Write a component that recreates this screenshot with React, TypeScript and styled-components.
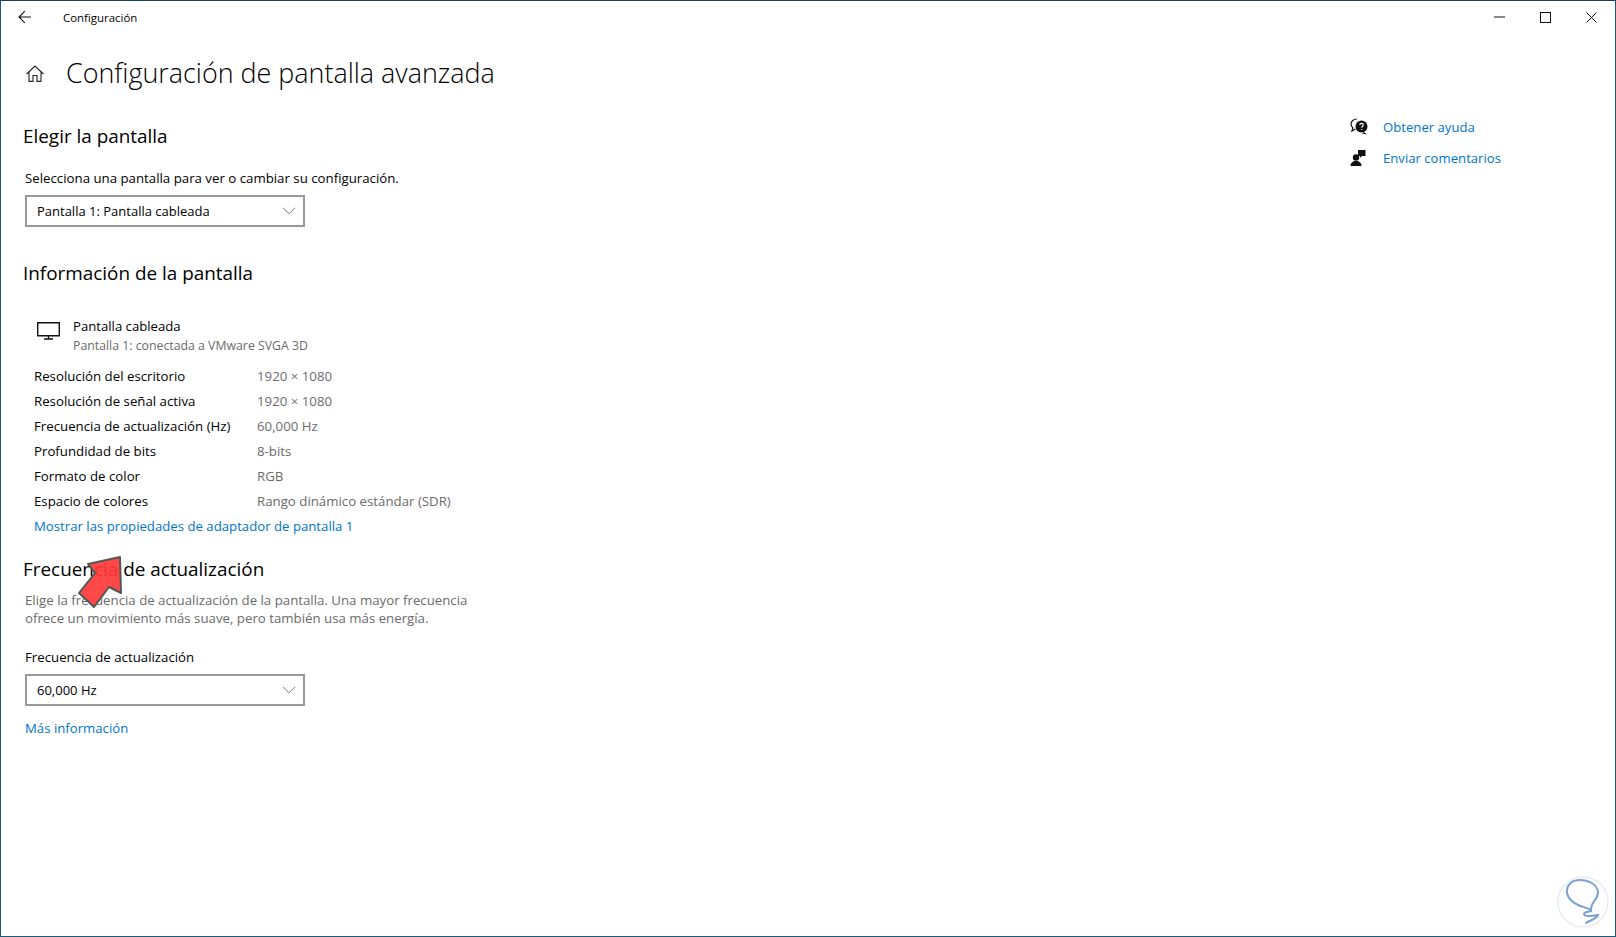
import React from "react";
import styled, { createGlobalStyle } from "styled-components";

const Global = createGlobalStyle`
  html, body { margin: 0; padding: 0; background: #fff; }
  body { font-family: "Open Sans", "Noto Sans", "Liberation Sans", sans-serif; color: #000; }
`;

const Win = styled.div`
  position: relative;
  box-sizing: border-box;
  width: 1616px;
  height: 937px;
  border: 1px solid #1b5a7a;
  border-top-color: #1a3f58;
  background: #fff;
  overflow: hidden;
`;
const TitleBar = styled.header`
  display: flex;
  align-items: center;
  height: 32px;
  padding-right: 1px;
`;
const BackBtn = styled.div`
  width: 48px;
  padding-left: 17px;
  box-sizing: border-box;
  display: flex;
  align-items: center;
`;
const TitleText = styled.span`
  margin-left: 14px;
  font-size: 11.45px;
  flex: 1;
`;
const WinBtn = styled.div`
  width: 46px;
  height: 32px;
  display: flex;
  align-items: center;
  justify-content: center;
`;
const Layout = styled.div`
  display: flex;
  justify-content: space-between;
`;
const Main = styled.main`
  width: 600px;
  padding-left: 23px;
`;
const PageHead = styled.div`
  display: flex;
  align-items: center;
  margin-top: 20px;
  height: 40px;
`;
const HomeIcon = styled.div`
  width: 20px;
  margin-left: 2px;
  display: flex;
`;
const PageTitle = styled.h1`
  margin: 0 0 0 20px;
  font-size: 26.9px;
  font-weight: 300;
  line-height: 40px;
`;
const Section = styled.h2<{ $top: number }>`
  margin: ${(p) => p.$top}px 0 0 -1px;
  font-size: 18.9px;
  font-weight: 400;
  line-height: 28px;
`;
const Text = styled.p<{ $top: number }>`
  margin: ${(p) => p.$top}px 0 0 1px;
  font-size: 13.25px;
  line-height: 18px;
`;
const Muted = styled(Text)`
  color: #6b6b6b;
`;
const Select = styled.div<{ $top: number }>`
  margin: ${(p) => p.$top}px 0 0 1px;
  box-sizing: border-box;
  width: 280px;
  height: 32px;
  border: 2px solid #999;
  display: flex;
  align-items: center;
  justify-content: space-between;
  padding: 0 7px 0 10px;
  font-size: 13px;
`;
const Device = styled.div`
  display: flex;
  margin: 29px 0 0 13px;
  height: 40px;
`;
const DeviceIcon = styled.div`
  width: 23px;
  margin-right: 13px;
  padding-top: 6px;
`;
const DeviceName = styled.div`
  font-size: 13.15px;
  line-height: 20px;
`;
const DeviceSub = styled.div`
  font-size: 12.3px;
  line-height: 19px;
  color: #6b6b6b;
`;
const Rows = styled.div`
  margin: 8px 0 0 10px;
`;
const Row = styled.div`
  display: grid;
  grid-template-columns: 223px 1fr;
  height: 25px;
  line-height: 25px;
  font-size: 13.25px;
`;
const Value = styled.span`
  color: #6b6b6b;
`;
const Link = styled.a<{ $left?: number; $top?: number }>`
  display: block;
  color: #0074cc;
  font-size: 13.2px;
  line-height: 25px;
  margin: ${(p) => p.$top ?? 0}px 0 0 ${(p) => p.$left ?? 0}px;
`;
const Aside = styled.aside`
  width: 265px;
  padding-top: 78px;
`;
const HelpRow = styled.div`
  display: flex;
  align-items: center;
  height: 31px;
`;
const HelpIcon = styled.div`
  width: 33px;
  box-sizing: border-box;
  display: flex;
`;
const HelpLink = styled.a`
  color: #0074cc;
  font-size: 13.15px;
`;
const ArrowMark = styled.svg`
  position: absolute;
  left: 69px;
  top: 547px;
  pointer-events: none;
`;
const Badge = styled.svg`
  position: absolute;
  left: 1553px;
  top: 871px;
`;

export default function App() {
  const rows = [
    ["Resolución del escritorio", "1920 × 1080"],
    ["Resolución de señal activa", "1920 × 1080"],
    ["Frecuencia de actualización (Hz)", "60,000 Hz"],
    ["Profundidad de bits", "8-bits"],
    ["Formato de color", "RGB"],
    ["Espacio de colores", "Rango dinámico estándar (SDR)"],
  ];
  const chev = (
    <svg width="14" height="8" viewBox="0 0 14 8" fill="none" stroke="#777" strokeWidth="1">
      <path d="M1 .8 7 6.8 13 .8" />
    </svg>
  );
  return (
    <Win>
      <Global />
      <TitleBar>
        <BackBtn>
          <svg width="14" height="14" viewBox="0 0 14 14" fill="none" stroke="#111" strokeWidth="1.1">
            <path d="M13 7H1.2M6.8 1.2 1 7l5.8 5.8" />
          </svg>
        </BackBtn>
        <TitleText>Configuración</TitleText>
        <WinBtn>
          <svg width="11" height="2" viewBox="0 0 11 2"><path d="M0 1h11" stroke="#111" /></svg>
        </WinBtn>
        <WinBtn>
          <svg width="11" height="11" viewBox="0 0 11 11" fill="none"><rect x=".5" y=".5" width="10" height="10" stroke="#111" /></svg>
        </WinBtn>
        <WinBtn>
          <svg width="11" height="11" viewBox="0 0 11 11" fill="none"><path d="M.5.5l10 10M10.500.5l-10 10" stroke="#111" /></svg>
        </WinBtn>
      </TitleBar>
      <Layout>
        <Main>
          <PageHead>
            <HomeIcon>
              <svg width="18" height="17" viewBox="0 0 18 17" fill="none" stroke="#222" strokeWidth="1.1">
                <path d="M.6 9 9 1l8.400 8M3 7v9.400h4V10.500h4v5.900h4V7" />
              </svg>
            </HomeIcon>
            <PageTitle>Configuración de pantalla avanzada</PageTitle>
          </PageHead>
          <Section $top={29}>Elegir la pantalla</Section>
          <Text $top={19}>Selecciona una pantalla para ver o cambiar su configuración.</Text>
          <Select $top={8}>Pantalla 1: Pantalla cableada{chev}</Select>
          <Section $top={32}>Información de la pantalla</Section>
          <Device>
            <DeviceIcon>
              <svg width="23" height="18" viewBox="0 0 23 18" fill="none" stroke="#111" strokeWidth="1.4">
                <path d="M.7.7h21.600v13H.7zM11.500 13.700v3.200M7 17h9" />
              </svg>
            </DeviceIcon>
            <div>
              <DeviceName>Pantalla cableada</DeviceName>
              <DeviceSub>Pantalla 1: conectada a VMware SVGA 3D</DeviceSub>
            </div>
          </Device>
          <Rows>
            {rows.map(([k, v]) => (
              <Row key={k}>
                <span>{k}</span>
                <Value>{v}</Value>
              </Row>
            ))}
            <Link>Mostrar las propiedades de adaptador de pantalla 1</Link>
          </Rows>
          <Section $top={16}>Frecuencia de actualización</Section>
          <Muted $top={8}>
            Elige la frecuencia de actualización de la pantalla. Una mayor frecuencia
            <br />
            ofrece un movimiento más suave, pero también usa más energía.
          </Muted>
          <Text $top={21}>Frecuencia de actualización</Text>
          <Select $top={8}>60,000 Hz{chev}</Select>
          <Link $left={1} $top={10}>Más información</Link>
        </Main>
        <Aside>
          <HelpRow>
            <HelpIcon>
              <svg width="18" height="17" viewBox="0 0 18 17">
                <path d="M7 1C3.400 1 1 3.200 1 6c0 1.500.7 2.800 1.800 3.700L2 13l3.400-2" fill="none" stroke="#111" strokeWidth="1.2" />
                <circle cx="11.500" cy="8.500" r="6" fill="#111" />
                <path d="M14 14l3 2.500-5-1z" fill="#111" />
                <path d="M9.800 7c0-2.200 3.500-2.200 3.500 0 0 1.300-1.700 1.300-1.700 2.700M11.600 11v1" stroke="#fff" strokeWidth="1.1" fill="none" />
              </svg>
            </HelpIcon>
            <HelpLink>Obtener ayuda</HelpLink>
          </HelpRow>
          <HelpRow>
            <HelpIcon>
              <svg width="16" height="16" viewBox="0 0 16 16" fill="#111">
                <circle cx="6" cy="7.500" r="3.200" />
                <path d="M.5 16c0-3.500 2.400-5 5.500-5s5.500 1.500 5.500 5z" />
                <path d="M8 0h7.500v6H12L10 7.700V6H8z" />
              </svg>
            </HelpIcon>
            <HelpLink>Enviar comentarios</HelpLink>
          </HelpRow>
        </Aside>
      </Layout>
      <ArrowMark width="60" height="66" viewBox="70 548 60 66">
        <path
          d="M120 557 88 564 95 573 79 593 94 607 109 587 121 593Z"
          fill="#ff3838"
          fillOpacity=".92"
          stroke="#4f5757"
          strokeWidth="2"
          strokeLinejoin="round"
        />
      </ArrowMark>
      <Badge width="60" height="64" viewBox="1554 872 60 64">
        <circle cx="1583" cy="902" r="25" fill="#fff" stroke="#e6ecf4" strokeWidth="1.5" />
        <path
          d="M1591 910C1586 907 1582 907 1578 905C1572 902 1568 899 1567 893C1566 885 1572 880 1580 880C1588 880 1597 884 1598 892C1598 899 1593 901 1592 905C1591 907 1591 909 1591 911C1588 912 1584 912 1584 914C1584 917 1592 916 1598 915C1597 919 1590 920 1586 923"
          fill="none"
          stroke="#7ba0d4"
          strokeWidth="2"
          strokeLinecap="round"
        />
      </Badge>
    </Win>
  );
}
